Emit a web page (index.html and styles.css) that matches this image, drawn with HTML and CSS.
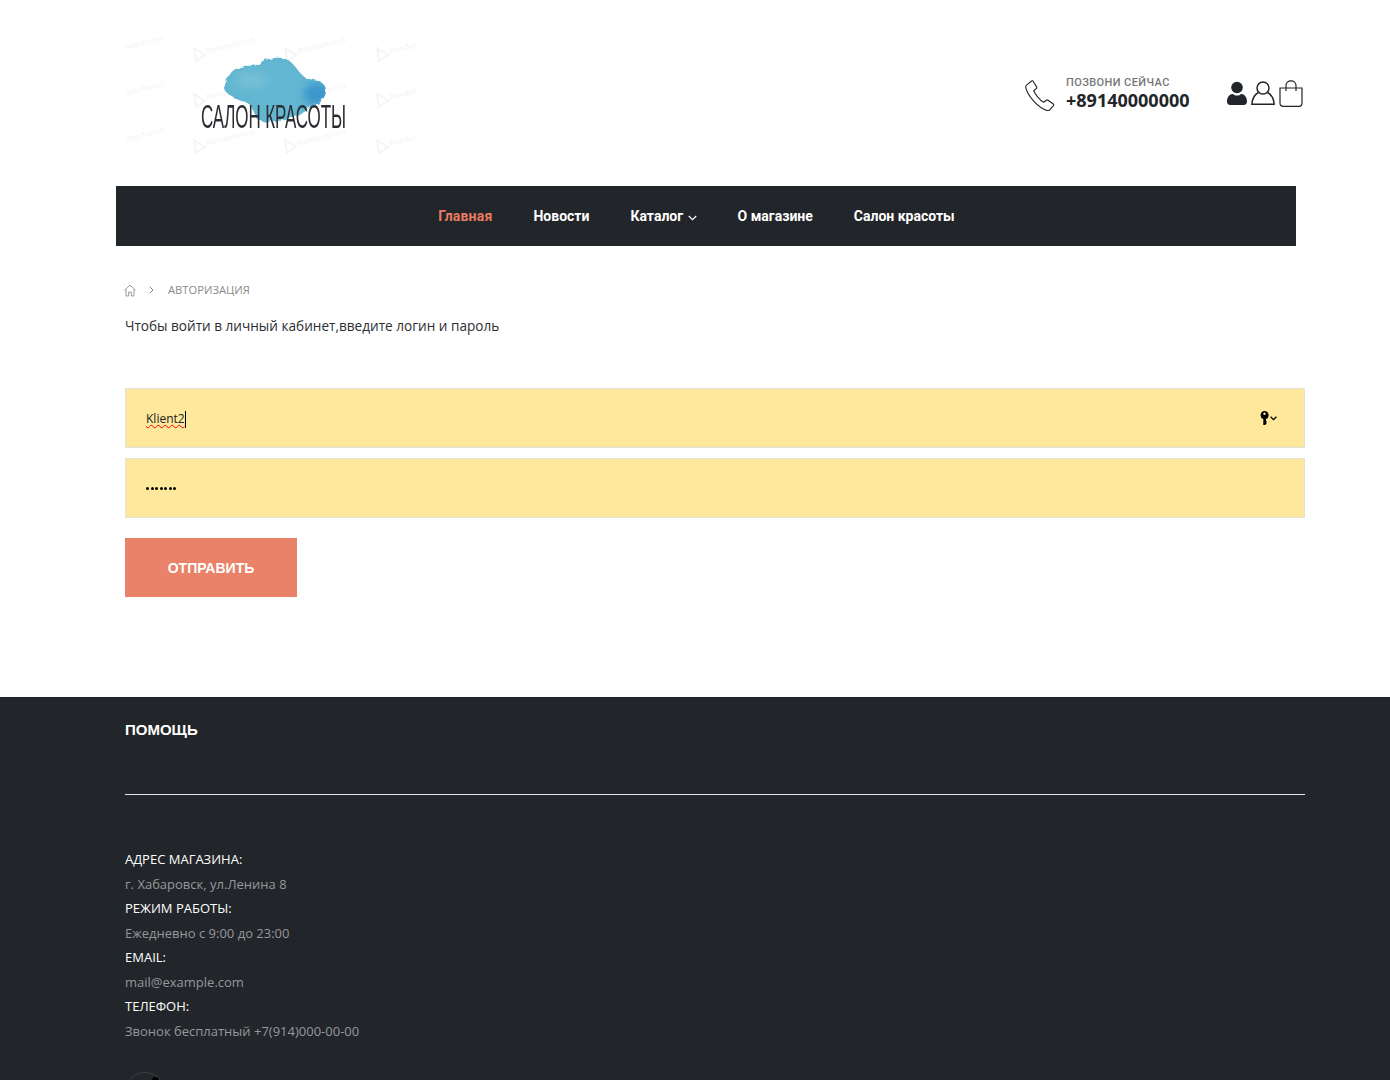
FILE: index.html
```html
<!DOCTYPE html>
<html lang="ru">
<head>
<meta charset="utf-8">
<title>Авторизация</title>
<link rel="stylesheet" href="styles.css">
</head>
<body>
<header class="header">
  <a class="logo" href="#" aria-label="Салон красоты">
    <svg class="logo-svg" width="300" height="150" viewBox="0 0 300 150">
      <defs>
        <filter id="wash" x="-10%" y="-10%" width="120%" height="120%">
          <feTurbulence type="fractalNoise" baseFrequency="0.16" numOctaves="3" seed="4" result="n"/>
          <feDisplacementMap in="SourceGraphic" in2="n" scale="4" result="d"/>
          <feGaussianBlur in="d" stdDeviation="0.6"/>
        </filter>
        <filter id="blotch" x="-60%" y="-60%" width="220%" height="220%"><feGaussianBlur stdDeviation="4"/></filter>
        <filter id="softer" x="-5%" y="-20%" width="110%" height="140%"><feGaussianBlur stdDeviation="0.35"/></filter>
        <clipPath id="cloud-clip"><path d="M99 68C102 58 106 50 113 48C120 44 127 47 132 45C138 40 144 38 150 38C158 37 163 39 167 43C172 48 175 54 181 58C187 60 193 60 197 63C201 66 202 71 200 75C198 81 194 83 190 85C184 87 179 93 173 96C165 99 157 101 150 101C144 102 138 102 133 100C128 94 128 88 124 84C118 81 112 80 106 76C103 74 100 72 99 68z"/></clipPath>
      </defs>
      <g class="wm" filter="url(#softer)">
        <text x="1" y="30" transform="rotate(-14 1 30)">nderforest</text>
        <text x="1" y="76" transform="rotate(-14 1 76)">nderforest</text>
        <text x="1" y="122" transform="rotate(-14 1 122)">nderforest</text>
        <polygon class="wm-mark" points="69,28 80,35 71,41"/>
        <polygon class="wm-mark" points="69,74 80,81 71,87"/>
        <polygon class="wm-mark" points="69,120 80,127 71,133"/>
        <text x="82" y="34" transform="rotate(-14 82 34)">Renderforest</text>
        <text x="82" y="80" transform="rotate(-14 82 80)">Renderforest</text>
        <text x="82" y="126" transform="rotate(-14 82 126)">Renderforest</text>
        <polygon class="wm-mark" points="160,28 171,35 162,41"/>
        <polygon class="wm-mark" points="160,74 171,81 162,87"/>
        <polygon class="wm-mark" points="160,120 171,127 162,133"/>
        <text x="173" y="34" transform="rotate(-14 173 34)">Renderforest</text>
        <text x="173" y="80" transform="rotate(-14 173 80)">Renderforest</text>
        <text x="173" y="126" transform="rotate(-14 173 126)">Renderforest</text>
        <polygon class="wm-mark" points="252,28 263,35 254,41"/>
        <polygon class="wm-mark" points="252,74 263,81 254,87"/>
        <polygon class="wm-mark" points="252,120 263,127 254,133"/>
        <text x="265" y="34" transform="rotate(-14 265 34)">Render</text>
        <text x="265" y="80" transform="rotate(-14 265 80)">Render</text>
        <text x="265" y="126" transform="rotate(-14 265 126)">Render</text>
      </g>
      <g filter="url(#wash)">
        <path class="cloud" d="M99 68C102 58 106 50 113 48C120 44 127 47 132 45C138 40 144 38 150 38C158 37 163 39 167 43C172 48 175 54 181 58C187 60 193 60 197 63C201 66 202 71 200 75C198 81 194 83 190 85C184 87 179 93 173 96C165 99 157 101 150 101C144 102 138 102 133 100C128 94 128 88 124 84C118 81 112 80 106 76C103 74 100 72 99 68z"/>
        <g clip-path="url(#cloud-clip)">
          <ellipse class="blotch" cx="192" cy="74" rx="13" ry="11" filter="url(#blotch)"/>
          <ellipse class="blotch-light" cx="127" cy="60" rx="16" ry="9" filter="url(#blotch)"/>
        </g>
      </g>
      <text class="logo-text" transform="translate(76 108) scale(.5 1)" textLength="290" lengthAdjust="spacing" filter="url(#softer)">САЛОН КРАСОТЫ</text>
    </svg>
  </a>
  <div class="header-right">
    <svg class="phone-icon" width="32" height="32" viewBox="0 0 32 32" fill="none" stroke="#222529" stroke-width="1.1" stroke-linejoin="round" stroke-linecap="round">
      <path d="M2.5 6.2 7.6 2c.7-.5 1.3-.3 1.7.4l3.3 5.5c.4.7.3 1.2-.3 1.7l-2.6 2.1c1.2 3 5.9 9.5 10 11.5l2.6-2c.6-.4 1.100-.4 1.700 0l5.300 3.800c.6.5.7 1 .2 1.600l-3.800 4.300c-.6.6-1.300.9-2.200.7C14 29 2.900 16 1.700 8.200c-.1-.8.2-1.500.8-2z"/>
    </svg>
    <div class="call">
      <span class="call-label">Позвони сейчас</span>
      <a class="call-number" href="#">+89140000000</a>
    </div>
    <div class="user-icons">
      <svg width="20" height="24" viewBox="0 0 20 24" fill="#222529">
        <circle cx="10" cy="6.500" r="5.800"/>
        <path d="M0 20.500C0 15.500 3 13 6 13c1.200 1 2.500 1.500 4 1.500s2.800-.5 4-1.500c3 0 6 2.500 6 7.500 0 2-1.300 3.500-3.300 3.500H3.300C1.300 24 0 22.500 0 20.500z"/>
      </svg>
      <svg width="24" height="24" viewBox="0 0 24 24" fill="none" stroke="#222529" stroke-width="1.500">
        <circle cx="12" cy="7" r="6"/>
        <path d="M7.500 11.500C3.500 13.500 1.200 18 .9 23.200h22.200C22.800 18 20.500 13.500 16.500 11.500"/>
      </svg>
      <svg width="24" height="27" viewBox="0 0 24 27" fill="none" stroke="#222529" stroke-width="1.200">
        <path d="M1 8h22v15c0 2-1.300 3.300-3.300 3.300H4.300C2.300 26.300 1 25 1 23z"/>
        <path d="M7 11V5.500C7 2.700 9.200.8 12 .8s5 1.900 5 4.700V11"/>
      </svg>
    </div>
  </div>
</header>

<nav class="nav">
  <a class="nav-link active" href="#">Главная</a>
  <a class="nav-link" href="#">Новости</a>
  <a class="nav-link" href="#">Каталог
    <svg class="nav-chevron" width="9" height="6" viewBox="0 0 9 6" fill="none" stroke="#fff" stroke-width="1.200"><path d="M.8 1l3.700 3.700L8.200 1"/></svg>
  </a>
  <a class="nav-link" href="#">О магазине</a>
  <a class="nav-link" href="#">Салон красоты</a>
</nav>

<main class="main">
  <div class="crumbs">
    <svg width="12" height="13" viewBox="0 0 12 13" fill="none" stroke="#8a9099" stroke-width="0.900"><path d="M.5 6.300 6 1l5.500 5.300M2 5.200V12h2.700V8h2.600v4H10V5.200"/></svg>
    <svg class="crumb-sep" width="5" height="8" viewBox="0 0 5 8" fill="none" stroke="#777" stroke-width="0.900"><path d="M.8.800 4 4 .8 7.200"/></svg>
    <span class="crumb-current">Авторизация</span>
  </div>
  <p class="intro">Чтобы войти в личный кабинет,введите логин и пароль</p>
  <form class="form">
    <div class="field">
      <span class="field-text"><span class="misspelled">Klient2</span><span class="caret"></span></span>
      <span class="key">
        <svg width="9" height="14" viewBox="0 0 9 14" fill="#000"><path d="M4.500 0a4.200 4.200 0 0 1 1.500 8.100V10l1 .8-1 .9.800.8L5 14H3.300V8.100A4.200 4.200 0 0 1 4.500 0zm0 1.500a1.200 1.200 0 1 0 0 2.400 1.200 1.200 0 0 0 0-2.400z"/></svg>
        <svg width="7" height="5" viewBox="0 0 7 5" fill="none" stroke="#000" stroke-width="1.300"><path d="M.6.800 3.500 3.700 6.400.8"/></svg>
      </span>
    </div>
    <div class="field">
      <span class="dots"><i></i><i></i><i></i><i></i><i></i><i></i><i></i></span>
    </div>
    <button class="submit" type="button">Отправить</button>
  </form>
</main>

<footer class="footer">
  <div class="footer-inner">
    <h3 class="footer-title">Помощь</h3>
    <ul class="contacts">
      <li class="c-label">Адрес магазина:</li>
      <li class="c-value">г. Хабаровск, ул.Ленина 8</li>
      <li class="c-label">Режим работы:</li>
      <li class="c-value">Ежедневно с 9:00 до 23:00</li>
      <li class="c-label">Email:</li>
      <li class="c-value">mail@example.com</li>
      <li class="c-label">Телефон:</li>
      <li class="c-value">Звонок бесплатный +7(914)000-00-00</li>
    </ul>
    <div class="social"><span class="social-dot"></span></div>
  </div>
</footer>
</body>
</html>
```

FILE: styles.css
```css
* { box-sizing: border-box; }
html, body { margin: 0; padding: 0; height: 1080px; overflow: hidden; background: #fff; }
body { font-family: "Open Sans", sans-serif; color: #222529; }
a { color: inherit; text-decoration: none; }

.header {
  height: 186px;
  padding: 20px 87px 0 125px;
  display: flex;
  justify-content: space-between;
  align-items: flex-start;
}
.logo { display: block; width: 300px; height: 150px; }
.logo-svg { display: block; }
.wm text { font: 700 8px "Liberation Sans", sans-serif; fill: #f6f6f7; }
.wm-mark { fill: none; stroke: #f5f5f6; stroke-width: 2; }
.cloud { fill: #62b6d1; }
.blotch { fill: #3a94cc; }
.blotch-light { fill: #74bfd5; }
.logo-text { font: 400 34px "Liberation Sans Narrow", "Liberation Sans", sans-serif; fill: #2c2f33; }

.header-right { display: flex; align-items: center; margin-top: 54px; }
.phone-icon { margin: 3px 10px 0 0; display: block; }
.call { display: flex; flex-direction: column; width: 161px; }
.call-label {
  font: 500 11px/12px Roboto, sans-serif;
  color: #777;
  text-transform: uppercase;
  letter-spacing: .4px;
  margin-top: 3px;
}
.call-number { font: 700 18px/24px "Open Sans", sans-serif; color: #222529; margin-top: -1px; }
.user-icons { display: flex; align-items: center; gap: 4px; }
.user-icons svg { display: block; }

.nav {
  margin-left: 116px;
  width: 1180px;
  height: 60px;
  padding-right: 19px;
  background: #222529;
  display: flex;
  align-items: center;
  justify-content: center;
  gap: 41px;
}
.nav-link {
  font: 700 14px/18px Roboto, sans-serif;
  color: #fff;
  white-space: nowrap;
}
.nav-link.active { color: #ea7b62; letter-spacing: .2px; }
.nav-chevron { margin-left: 1px; vertical-align: 0; }

.main { padding: 36px 85px 0 124px; height: 451px; }
.crumbs { display: flex; align-items: center; height: 16px; }
.crumb-sep { margin-left: 13px; }
.crumb-current {
  margin-left: 14px;
  font-size: 11.200px;
  line-height: 16px;
  color: #8a8a8a;
  text-transform: uppercase;
}
.intro { margin: 16px 0 0 1px; font-size: 13.600px; line-height: 24px; color: #2b2e32; }

.form { margin: 50px 0 0 1px; }
.field {
  height: 60px;
  margin-bottom: 10px;
  padding: 0 20px;
  display: flex;
  align-items: center;
  justify-content: space-between;
  background: #fee89b;
  border: 1px solid #e2e2dc;
}
.field-text { font-size: 12px; line-height: 16px; color: #222; display: flex; align-items: center; padding-top: 2px; }
.misspelled { text-decoration: underline wavy #f00 1px; text-underline-offset: 1px; }
.caret { display: inline-block; width: 1px; height: 17px; background: #000; }
.key { display: flex; align-items: center; gap: 1px; margin-right: 7px; }
.key svg { display: block; }
.dots { display: flex; gap: 1.500px; }
.dots i { display: block; width: 3px; height: 3px; border-radius: 50%; background: #000; }
.submit {
  display: block;
  width: 172px;
  height: 59px;
  margin-top: 20px;
  border: 0;
  padding: 0;
  background: #ea8269;
  color: #fff;
  font: 700 14px "Liberation Sans", sans-serif;
  text-transform: uppercase;
}

.footer { height: 383px; background: #222529; overflow: hidden; }
.footer-inner { width: 1180px; margin-left: 125px; padding-top: 23px; }
.footer-title {
  margin: 0;
  height: 75px;
  font: 700 15px/20px "Liberation Sans", sans-serif;
  color: #fff;
  text-transform: uppercase;
  border-bottom: 1px solid #e5e5e5;
}
.contacts { list-style: none; margin: 52px 0 0; padding: 0; font-size: 13px; line-height: 24.500px; }
.c-label { color: #fff; text-transform: uppercase; }
.c-value { color: #95989c; }
.social {
  position: relative;
  width: 40px;
  height: 40px;
  margin-top: 29px;
  border-radius: 50%;
  border: 1px solid #3b3e42;
}
.social-dot {
  position: absolute;
  top: 4px;
  left: 26px;
  width: 7px;
  height: 7px;
  border-radius: 50%;
  background: #000;
}
```
